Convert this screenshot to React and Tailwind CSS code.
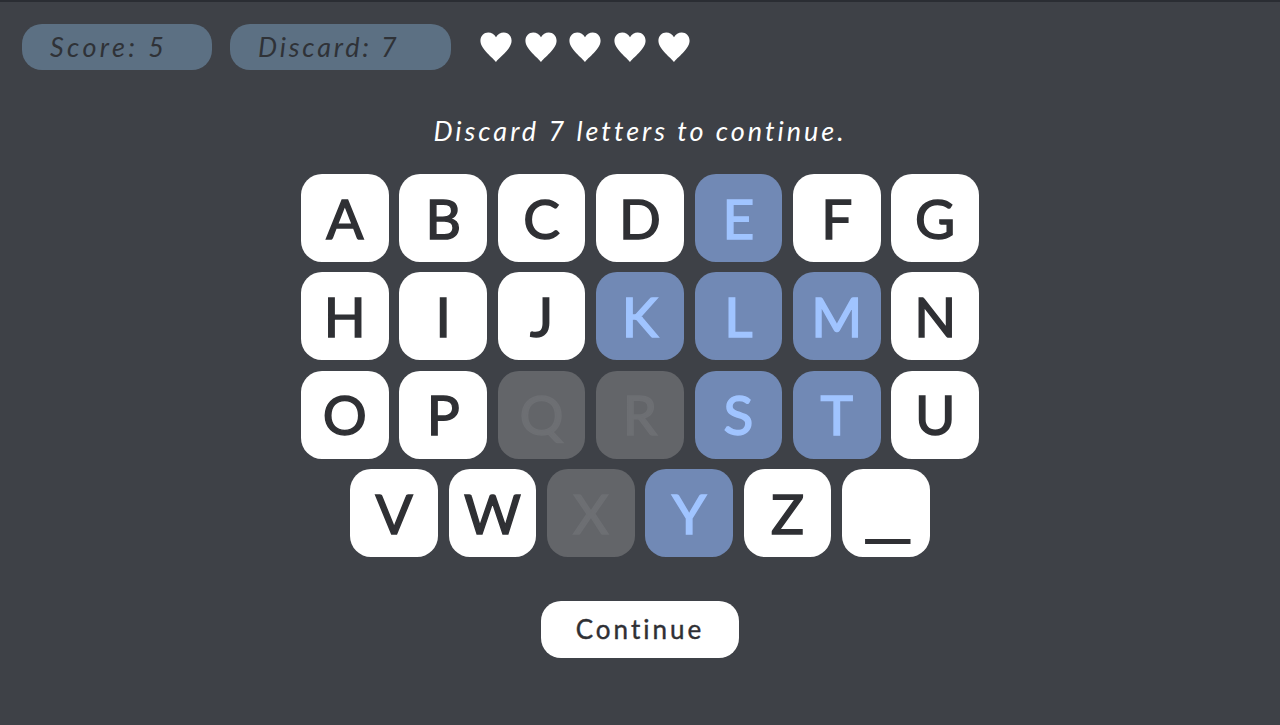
const rows = [
  ["A", "B", "C", "D", "E", "F", "G"],
  ["H", "I", "J", "K", "L", "M", "N"],
  ["O", "P", "Q", "R", "S", "T", "U"],
  ["V", "W", "X", "Y", "Z", "_"],
];

const selected = ["E", "K", "L", "M", "S", "T", "Y"];
const used = ["Q", "R", "X"];

function Heart() {
  return (
    <svg viewBox="0 0 24 24" className="w-[34px] h-[34px] fill-white">
      <path d="M12 22.5 C10 19.5 1 13.5 1 7.5 C1 4 3.6 1.7 6.5 1.7 C8.8 1.7 10.9 3 12 5.2 C13.1 3 15.2 1.7 17.5 1.7 C20.4 1.7 23 4 23 7.5 C23 13.5 14 19.5 12 22.5 Z" />
    </svg>
  );
}

function Tile({ letter }) {
  let color = "bg-white text-[#2f3034]";
  if (selected.includes(letter)) color = "bg-[#7189b5] text-[#a0c4ff]";
  if (used.includes(letter)) color = "bg-[#636569] text-[#6d6f73]";

  return (
    <div className={`w-[87.5px] h-[88px] rounded-[21px] flex items-center justify-center text-[55px] ${color}`}>
      {letter === "_" ? (
        <span className="font-['Liberation_Sans',sans-serif] text-[78px] leading-none -translate-y-[12px] translate-x-[2px]">_</span>
      ) : (
        <span className="[-webkit-text-stroke:1.5px_currentColor]">{letter}</span>
      )}
    </div>
  );
}

export default function App() {
  return (
    <div className="h-[725px] overflow-hidden bg-[#3e4147] border-t-2 border-[#2a2d33] font-['Lato',sans-serif]">
      <div className="flex items-center pt-[22px] pl-[22px]">
        <div className="w-[190px] h-[46px] rounded-[20px] bg-[#5c7083] text-[#2f3237] text-[27px] italic tracking-[3.4px] pl-[28px] flex items-center">
          Score: 5
        </div>
        <div className="w-[221px] h-[46px] rounded-[20px] bg-[#5c7083] text-[#2f3237] text-[27px] italic tracking-[2.8px] pl-[28px] ml-[18px] flex items-center">
          Discard: 7
        </div>
        <div className="flex gap-[10.5px] ml-[28px]">
          <Heart />
          <Heart />
          <Heart />
          <Heart />
          <Heart />
        </div>
      </div>

      <p className="mt-[46px] h-[30px] leading-[30px] text-center text-white text-[27px] italic tracking-[3px]">
        Discard 7 letters to continue.
      </p>

      <div className="mt-[28px] flex flex-col items-center gap-[10.3px]">
        {rows.map((row, i) => (
          <div key={i} className="flex gap-[10.9px]">
            {row.map((letter) => (
              <Tile key={letter} letter={letter} />
            ))}
          </div>
        ))}
      </div>

      <div className="mt-[44px] flex justify-center">
        <button className="w-[198px] h-[57px] rounded-[20px] bg-white text-[#2f3034] text-[26px] tracking-[3px] [-webkit-text-stroke:0.4px_currentColor]">
          Continue
        </button>
      </div>
    </div>
  );
}
